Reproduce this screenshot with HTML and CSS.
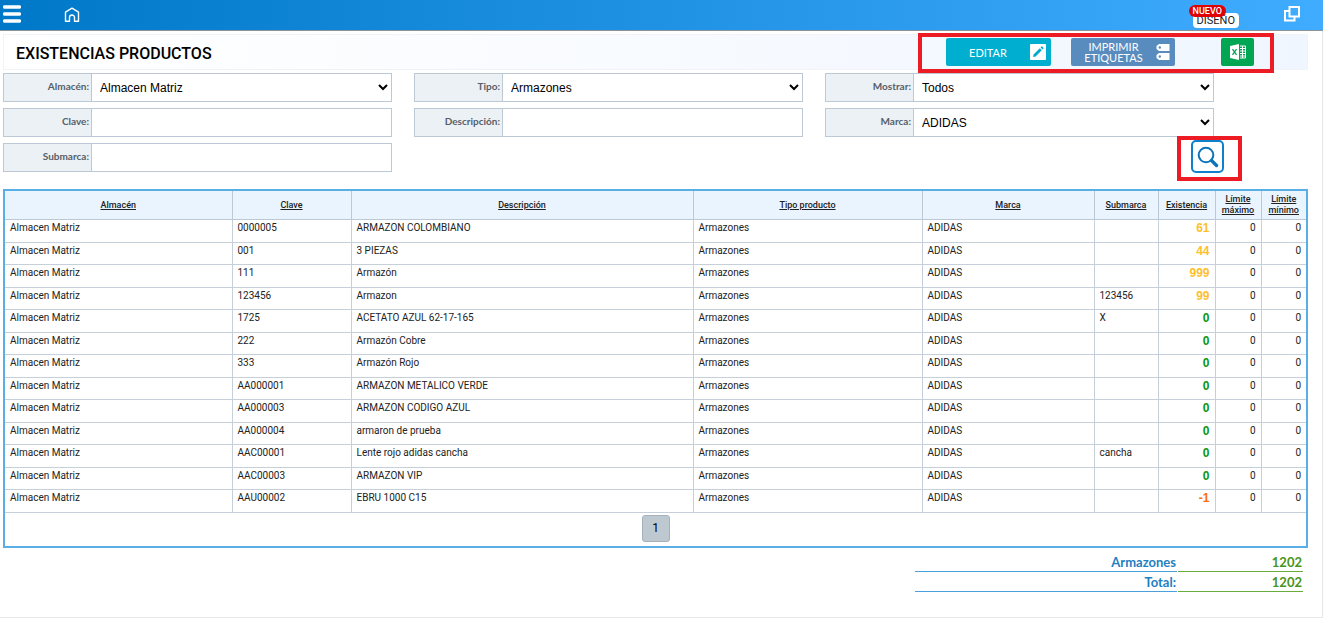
FILE: index.html
```html
<!DOCTYPE html>
<html lang="es">
<head>
    <meta charset="UTF-8">
    <meta name="viewport" content="width=device-width, initial-scale=1.0">
    <title>Existencias productos</title>
    <link rel="stylesheet" href="styles.css">
</head>
<body>

<header class="topbar">
    <button class="menu-btn" aria-label="Menú">
        <svg width="18" height="18" viewBox="0 0 18 18"><path d="M1.5 2h15M1.5 9h15M1.5 16h15" stroke="#fff" stroke-width="3.4" stroke-linecap="round"/></svg>
    </button>
    <a class="home-link" href="#" aria-label="Inicio">
        <svg width="16" height="16" viewBox="0 0 16 16" fill="none" stroke="#fff" stroke-width="1.4" stroke-linejoin="round"><path d="M1.500 5.200 8 1.200l6.500 4v9h-4V10.500a2.500 2.500 0 0 0-5 0v3.700h-4z"/></svg>
    </a>
    <a class="design" href="#">
        <span class="design-new">NUEVO</span>
        <span class="design-name">DISEÑO</span>
    </a>
    <button class="window-btn" aria-label="Ventanas">
        <svg width="16" height="16" viewBox="0 0 16 16" fill="none" stroke="#fff" stroke-width="2"><path d="M5.500 1H15v9.500H5.500zM5 5H1v9.500h9.500V11"/></svg>
    </button>
</header>

<main class="page">
    <div class="titlebar">
        <h1>EXISTENCIAS PRODUCTOS</h1>
        <div class="actions">
            <button class="btn btn-edit">
                <span>EDITAR</span>
                <svg width="16" height="16" viewBox="0 0 16 16"><rect width="16" height="16" rx="1" fill="#fff"/><path d="M3 13l.6-2.600L9.800 4.200l2 2L5.600 12.400zM10.600 3.400l.8-.8q.4-.3.800 0l1.200 1.200q.3.400 0 .8l-.8.8z" fill="#00aacb"/></svg>
            </button>
            <button class="btn btn-labels">
                <span>IMPRIMIR<br>ETIQUETAS</span>
                <svg width="14" height="18" viewBox="0 0 14 18"><path d="M3 1h10.500v7H3L.5 6V3zM3 10h10.500v7H3L.5 15v-3z" fill="#fff"/><circle cx="3.800" cy="4.500" r="1.200" fill="#588cbf"/><circle cx="3.800" cy="13.500" r="1.200" fill="#588cbf"/></svg>
            </button>
            <button class="btn btn-excel" aria-label="Exportar a Excel">
                <svg width="16" height="16" viewBox="0 0 16 16"><path d="M0 2l9-2v16l-9-2z" fill="#fff"/><path d="M2.500 5.200l4 5.600M6.500 5.200l-4 5.600" stroke="#00a651" stroke-width="1.300"/><path d="M10 2h5.500v12H10" fill="none" stroke="#fff"/><path d="M10 4.500h5M10 7h5M10 9.500h5M10 12h5M12.500 2v12" stroke="#fff"/></svg>
            </button>
        </div>
    </div>

    <form class="filters">
        <div class="field">
            <label for="almacen">Almacén:</label>
            <select id="almacen"><option>Almacen Matriz</option></select>
        </div>
        <div class="field">
            <label for="tipo">Tipo:</label>
            <select id="tipo"><option>Armazones</option></select>
        </div>
        <div class="field">
            <label for="mostrar">Mostrar:</label>
            <select id="mostrar"><option>Todos</option></select>
        </div>
        <div class="field">
            <label for="clave">Clave:</label>
            <input id="clave" type="text">
        </div>
        <div class="field">
            <label for="descripcion">Descripción:</label>
            <input id="descripcion" type="text">
        </div>
        <div class="field">
            <label for="marca">Marca:</label>
            <select id="marca"><option>ADIDAS</option></select>
        </div>
        <div class="field">
            <label for="submarca">Submarca:</label>
            <input id="submarca" type="text">
        </div>
        <div class="search">
            <button type="button" class="search-btn" aria-label="Buscar">
                <svg width="22" height="22" viewBox="0 0 22 22" fill="none" stroke="#0e74ba"><circle cx="9" cy="9" r="7.300" stroke-width="2"/><path d="M14.500 14.500l5 5" stroke-width="3.400" stroke-linecap="round"/></svg>
            </button>
        </div>
    </form>

    <table class="stock">
        <colgroup>
            <col class="c-almacen"><col class="c-clave"><col class="c-desc"><col class="c-tipo"><col class="c-marca"><col class="c-sub"><col class="c-exis"><col class="c-max"><col class="c-min">
        </colgroup>
        <thead>
            <tr>
                <th><a href="#">Almacén</a></th>
                <th><a href="#">Clave</a></th>
                <th><a href="#">Descripción</a></th>
                <th><a href="#">Tipo producto</a></th>
                <th><a href="#">Marca</a></th>
                <th><a href="#">Submarca</a></th>
                <th><a href="#">Existencia</a></th>
                <th><a href="#">Límite máximo</a></th>
                <th><a href="#">Límite mínimo</a></th>
            </tr>
        </thead>
        <tbody>
            <tr><td>Almacen Matriz</td><td>0000005</td><td>ARMAZON COLOMBIANO</td><td>Armazones</td><td>ADIDAS</td><td></td><td class="qty high">61</td><td class="num">0</td><td class="num">0</td></tr>
            <tr><td>Almacen Matriz</td><td>001</td><td>3 PIEZAS</td><td>Armazones</td><td>ADIDAS</td><td></td><td class="qty high">44</td><td class="num">0</td><td class="num">0</td></tr>
            <tr><td>Almacen Matriz</td><td>111</td><td>Armazón</td><td>Armazones</td><td>ADIDAS</td><td></td><td class="qty high">999</td><td class="num">0</td><td class="num">0</td></tr>
            <tr><td>Almacen Matriz</td><td>123456</td><td>Armazon</td><td>Armazones</td><td>ADIDAS</td><td>123456</td><td class="qty high">99</td><td class="num">0</td><td class="num">0</td></tr>
            <tr><td>Almacen Matriz</td><td>1725</td><td>ACETATO AZUL 62-17-165</td><td>Armazones</td><td>ADIDAS</td><td>X</td><td class="qty zero">0</td><td class="num">0</td><td class="num">0</td></tr>
            <tr><td>Almacen Matriz</td><td>222</td><td>Armazón Cobre</td><td>Armazones</td><td>ADIDAS</td><td></td><td class="qty zero">0</td><td class="num">0</td><td class="num">0</td></tr>
            <tr><td>Almacen Matriz</td><td>333</td><td>Armazón Rojo</td><td>Armazones</td><td>ADIDAS</td><td></td><td class="qty zero">0</td><td class="num">0</td><td class="num">0</td></tr>
            <tr><td>Almacen Matriz</td><td>AA000001</td><td>ARMAZON METALICO VERDE</td><td>Armazones</td><td>ADIDAS</td><td></td><td class="qty zero">0</td><td class="num">0</td><td class="num">0</td></tr>
            <tr><td>Almacen Matriz</td><td>AA000003</td><td>ARMAZON CODIGO AZUL</td><td>Armazones</td><td>ADIDAS</td><td></td><td class="qty zero">0</td><td class="num">0</td><td class="num">0</td></tr>
            <tr><td>Almacen Matriz</td><td>AA000004</td><td>armaron de prueba</td><td>Armazones</td><td>ADIDAS</td><td></td><td class="qty zero">0</td><td class="num">0</td><td class="num">0</td></tr>
            <tr><td>Almacen Matriz</td><td>AAC00001</td><td>Lente rojo adidas cancha</td><td>Armazones</td><td>ADIDAS</td><td>cancha</td><td class="qty zero">0</td><td class="num">0</td><td class="num">0</td></tr>
            <tr><td>Almacen Matriz</td><td>AAC00003</td><td>ARMAZON VIP</td><td>Armazones</td><td>ADIDAS</td><td></td><td class="qty zero">0</td><td class="num">0</td><td class="num">0</td></tr>
            <tr><td>Almacen Matriz</td><td>AAU00002</td><td>EBRU 1000 C15</td><td>Armazones</td><td>ADIDAS</td><td></td><td class="qty negative">-1</td><td class="num">0</td><td class="num">0</td></tr>
        </tbody>
        <tfoot>
            <tr><td colspan="9"><button class="page-btn">1</button></td></tr>
        </tfoot>
    </table>

    <table class="totals">
        <tr><th>Armazones</th><td>1202</td></tr>
        <tr><th>Total:</th><td>1202</td></tr>
    </table>
</main>

</body>
</html>
```
FILE: styles.css
```css
* {
    box-sizing: border-box;
}

body {
    margin: 0 7px 0 0;
    font-family: Roboto, sans-serif;
    background-color: #fff;
    color: #222;
}

button {
    padding: 0;
    border: none;
    background: none;
    cursor: pointer;
}

svg {
    display: block;
}

/* top bar */
.topbar {
    display: flex;
    align-items: center;
    height: 31px;
    padding: 0 23px 3px 3px;
    background: linear-gradient(to right, #0078c8, #40acff);
    border-bottom: 1px solid #8c9298;
}

.home-link {
    margin-left: 43px;
    padding-top: 3px;
}

.design {
    display: flex;
    flex-direction: column;
    position: relative;
    margin-left: auto;
    padding: 13px 0 0 4px;
    text-decoration: none;
}

.design-name {
    padding: 1px 4px 0;
    border-radius: 4px;
    background-color: #fff;
    color: #222;
    font-size: 11px;
    line-height: 14px;
}

.design-new {
    position: absolute;
    top: 5px;
    left: 0;
    padding: 0 4px;
    border-radius: 6px;
    background-color: #e00000;
    color: #fff;
    font-size: 9px;
    font-weight: 500;
    line-height: 12px;
}

.window-btn {
    margin-left: 45px;
}

/* page */
.page {
    padding: 3px 14px 25px 3px;
    border-right: 1px solid #e6e6e6;
    border-bottom: 1px solid #e6e6e6;
}

.titlebar {
    display: flex;
    align-items: center;
    justify-content: space-between;
    height: 36px;
    padding: 0 53px 0 12px;
    border: 1px solid #f0f3f8;
    background: linear-gradient(to right, #fff, #f0f6ff);
}

.titlebar h1 {
    margin: 0;
    padding-top: 2px;
    color: #000;
    font-size: 16px;
    font-weight: 500;
}

.actions {
    display: flex;
    position: relative;
}

/* red frames */
.actions::after,
.search::after {
    content: "";
    position: absolute;
    border: 4px solid #ed1c24;
    pointer-events: none;
}

.actions::after {
    inset: -5px -20px -7px -28px;
}

.search::after {
    inset: -4px -18px -8px -14px;
}

.btn {
    display: flex;
    align-items: center;
    justify-content: flex-end;
    height: 28px;
    border-radius: 2px;
    color: #fff;
    font-family: Lato, sans-serif;
    font-size: 11px;
    line-height: 11px;
}

.btn span {
    flex: 1;
}

.btn-edit {
    width: 105px;
    padding: 0 5px 0 0;
    background-color: #00aecf;
}

.btn-labels {
    width: 104px;
    margin-left: 20px;
    padding: 0 5px 0 0;
    background-color: #588cbf;
}

.btn-excel {
    justify-content: center;
    width: 33px;
    margin-left: 46px;
    background-color: #00a651;
}

/* filters */
.filters {
    display: grid;
    grid-template-columns: repeat(3, 1fr);
    gap: 6px 22px;
    margin: 3px 94px 17px 0;
}

.field {
    display: flex;
    height: 29px;
    border: 1px solid #bcc8d3;
}

.field label {
    width: 88px;
    padding-right: 2px;
    border-right: 1px solid #bcc8d3;
    background-color: #ecf1f5;
    color: #56606a;
    font-family: Lato, sans-serif;
    font-size: 10px;
    font-weight: bold;
    line-height: 24px;
    text-align: right;
}

.field input,
.field select {
    flex: 1;
    min-width: 0;
    border: none;
    background-color: #fff;
    color: #000;
    font-family: "Liberation Sans", Arial, sans-serif;
    font-size: 12px;
}

.field input {
    padding: 0 7px;
}

.field select {
    padding: 0 0 0 4px;
}

.search {
    grid-column: 3;
    justify-self: end;
    position: relative;
    height: 33px;
    margin: -3px -10px -1px 0;
}

.search-btn {
    display: flex;
    align-items: center;
    justify-content: center;
    width: 33px;
    height: 33px;
    border: 2px solid #0e80cc;
    border-radius: 5px;
}

/* stock table */
.stock {
    width: 100%;
    table-layout: fixed;
    border-collapse: collapse;
    border: 2px solid #5aaee6;
    font-size: 10px;
}

.c-almacen { width: 228px; }
.c-clave { width: 119px; }
.c-tipo { width: 229px; }
.c-marca { width: 172px; }
.c-sub { width: 64px; }
.c-exis { width: 57px; }
.c-max, .c-min { width: 46px; }

.stock th {
    height: 29px;
    padding: 1px 4px 0;
    border: 1px solid #bcc8d3;
    background-color: #e9f4ff;
    font-size: 9px;
    font-weight: 500;
    line-height: 11px;
}

.stock th a {
    color: #222;
}

.stock td {
    height: 22px;
    padding: 1px 5px 0;
    border: 1px solid #c6d0da;
    line-height: 14px;
    vertical-align: top;
}

.stock tbody tr:nth-child(odd) td {
    height: 23px;
}

.stock .num {
    text-align: right;
}

.stock .qty {
    font-size: 12px;
    font-family: "Liberation Sans", Arial, sans-serif;
    font-weight: bold;
    text-align: right;
}

.stock .high { color: #fdbf2d; }
.stock .zero { color: #0a960a; }
.stock .negative { color: #ff6a0a; }

.stock tfoot td {
    height: 35px;
    padding-top: 2px;
    text-align: center;
}

.page-btn {
    width: 28px;
    height: 27px;
    border: 1px solid #a5b1bb;
    border-radius: 3px;
    background-color: #bec8d1;
    color: #000;
    font-family: Roboto, sans-serif;
    font-size: 12px;
}

/* totals */
.totals {
    width: 390px;
    margin: 4px 4px 0 auto;
    border-spacing: 1px 0;
    font-family: Lato, sans-serif;
    font-size: 13px;
    font-weight: bold;
    line-height: 18px;
    text-align: right;
}

.totals th {
    padding: 1px 1px 0;
    border-bottom: 1px solid #4aa0dc;
    color: #1f7fc0;
    text-align: right;
}

.totals td {
    width: 125px;
    padding: 1px 1px 0;
    border-bottom: 1px solid #6aac3c;
    color: #4a9420;
}
```
